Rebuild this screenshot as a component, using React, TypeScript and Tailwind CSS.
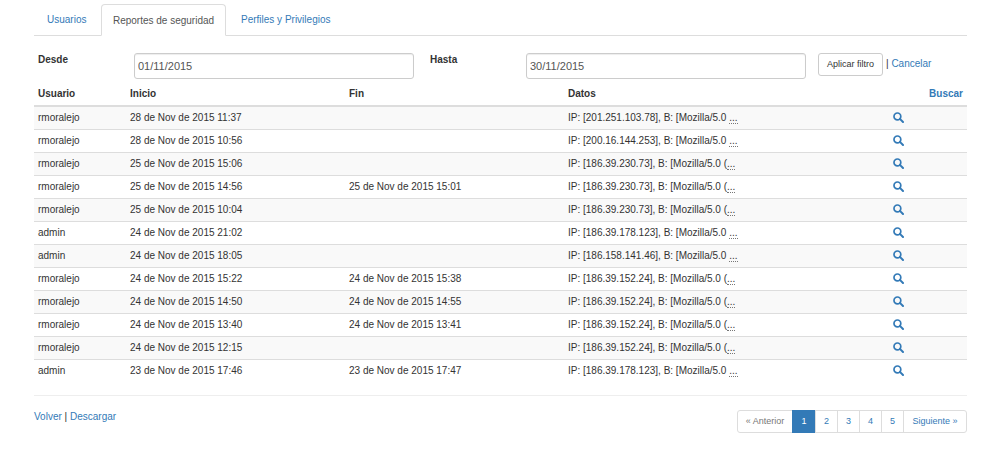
import React from "react";

const ROWS = [
    { user: "rmoralejo", start: "28 de Nov de 2015 11:37", end: "", data: "IP: [201.251.103.78], B: [Mozilla/5.0 " },
    { user: "rmoralejo", start: "28 de Nov de 2015 10:56", end: "", data: "IP: [200.16.144.253], B: [Mozilla/5.0 " },
    { user: "rmoralejo", start: "25 de Nov de 2015 15:06", end: "", data: "IP: [186.39.230.73], B: [Mozilla/5.0 (" },
    { user: "rmoralejo", start: "25 de Nov de 2015 14:56", end: "25 de Nov de 2015 15:01", data: "IP: [186.39.230.73], B: [Mozilla/5.0 (" },
    { user: "rmoralejo", start: "25 de Nov de 2015 10:04", end: "", data: "IP: [186.39.230.73], B: [Mozilla/5.0 (" },
    { user: "admin", start: "24 de Nov de 2015 21:02", end: "", data: "IP: [186.39.178.123], B: [Mozilla/5.0 " },
    { user: "admin", start: "24 de Nov de 2015 18:05", end: "", data: "IP: [186.158.141.46], B: [Mozilla/5.0 " },
    { user: "rmoralejo", start: "24 de Nov de 2015 15:22", end: "24 de Nov de 2015 15:38", data: "IP: [186.39.152.24], B: [Mozilla/5.0 (" },
    { user: "rmoralejo", start: "24 de Nov de 2015 14:50", end: "24 de Nov de 2015 14:55", data: "IP: [186.39.152.24], B: [Mozilla/5.0 (" },
    { user: "rmoralejo", start: "24 de Nov de 2015 13:40", end: "24 de Nov de 2015 13:41", data: "IP: [186.39.152.24], B: [Mozilla/5.0 (" },
    { user: "rmoralejo", start: "24 de Nov de 2015 12:15", end: "", data: "IP: [186.39.152.24], B: [Mozilla/5.0 (" },
    { user: "admin", start: "23 de Nov de 2015 17:46", end: "23 de Nov de 2015 17:47", data: "IP: [186.39.178.123], B: [Mozilla/5.0 " }
];

const PAGES = ["2", "3", "4", "5"];

function SearchIcon() {
    return (
        <svg width="11" height="11" viewBox="0 0 11 11" fill="none" className="block -ml-[2px]">
            <circle cx="4.4" cy="4.4" r="3.4" stroke="#337ab7" strokeWidth="1.7" />
            <path d="M6.9 6.9L10 10" stroke="#337ab7" strokeWidth="2" strokeLinecap="round" />
        </svg>
    );
}

export default function App() {
    return (
        <div className="w-[1000px] h-[469px] overflow-hidden bg-white text-[#333] text-[10px] leading-[15px] font-['Liberation_Sans',Arial,sans-serif]">
            <div className="w-[933px] ml-[34px] pt-[4px]">
                {/* Tabs */}
                <div className="flex h-[32px] border-b border-[#ddd]">
                    <a className="h-[31px] w-[67px] px-[13px] flex items-center text-[#337ab7]">Usuarios</a>
                    <a className="h-[32px] w-[125px] flex items-center justify-center bg-white border border-[#ddd] border-b-white rounded-t-[4px] text-[#555]">Reportes de seguridad</a>
                    <a className="h-[31px] px-[15px] flex items-center text-[#337ab7]">Perfiles y Privilegios</a>
                </div>

                {/* Filter */}
                <div className="flex h-[47px] pt-[17px] items-start">
                    <label className="w-[100px] pl-[4px] font-bold leading-[14px]">Desde</label>
                    <input readOnly value="01/11/2015" className="w-[280px] h-[26px] px-[3px] border border-[#ccc] rounded-[3px] text-[11px] text-[#555] shadow-[inset_0_1px_1px_rgba(0,0,0,0.075)]" />
                    <label className="w-[112px] pl-[16px] font-bold leading-[14px]">Hasta</label>
                    <input readOnly value="30/11/2015" className="w-[280px] h-[26px] px-[3px] border border-[#ccc] rounded-[3px] text-[11px] text-[#555] shadow-[inset_0_1px_1px_rgba(0,0,0,0.075)]" />
                    <button className="ml-[12px] w-[65px] h-[23px] border border-[#ccc] rounded-[3px] bg-white text-[9px] text-[#333]">Aplicar filtro</button>
                    <span className="ml-[3px] leading-[21px]">| <a className="text-[#337ab7]">Cancelar</a></span>
                </div>

                {/* Table */}
                <table className="w-[933px] table-fixed border-collapse mt-[1px]">
                    <thead>
                        <tr className="h-[22px] border-b-2 border-[#ddd] font-bold">
                            <th className="w-[92px] pl-[4px] pb-[3px] text-left">Usuario</th>
                            <th className="w-[219px] pl-[4px] pb-[3px] text-left">Inicio</th>
                            <th className="w-[219px] pl-[4px] pb-[3px] text-left">Fin</th>
                            <th className="pl-[4px] pb-[3px] text-left">Datos</th>
                            <th className="w-[72px] pr-[4px] pb-[3px] text-right text-[#337ab7]">Buscar</th>
                        </tr>
                    </thead>
                    <tbody>
                        {ROWS.map((row, idx) => (
                            <tr key={idx} className={`h-[23px] border-b border-[#ddd] last:border-b-0 ${idx % 2 === 0 ? "bg-[#f9f9f9]" : "bg-white"}`}>
                                <td className="pl-[4px]">{row.user}</td>
                                <td className="pl-[4px]">{row.start}</td>
                                <td className="pl-[4px]">{row.end}</td>
                                <td className="pl-[4px]">
                                    {row.data}
                                    <abbr className="border-b border-dotted border-[#777] no-underline">...</abbr>
                                </td>
                                <td>
                                    <SearchIcon />
                                </td>
                            </tr>
                        ))}
                    </tbody>
                </table>

                {/* Footer */}
                <div className="mt-[13px] border-t border-[#eee] pt-[14px] flex justify-between items-start">
                    <div className="-mt-[1px]">
                        <a className="text-[#337ab7]">Volver</a> | <a className="text-[#337ab7]">Descargar</a>
                    </div>
                    <div className="flex h-[23px] text-[9px]">
                        <span className="flex items-center justify-center w-[56px] border border-[#ddd] rounded-l-[3px] text-[#777]">« Anterior</span>
                        <span className="flex items-center justify-center w-[24px] -ml-px border border-[#337ab7] bg-[#337ab7] text-white">1</span>
                        {PAGES.map((p) => (
                            <span key={p} className="flex items-center justify-center w-[23px] -ml-px border border-[#ddd] text-[#337ab7]">{p}</span>
                        ))}
                        <span className="flex items-center justify-center w-[64px] -ml-px border border-[#ddd] rounded-r-[3px] text-[#337ab7]">Siguiente »</span>
                    </div>
                </div>
            </div>
        </div>
    );
}
